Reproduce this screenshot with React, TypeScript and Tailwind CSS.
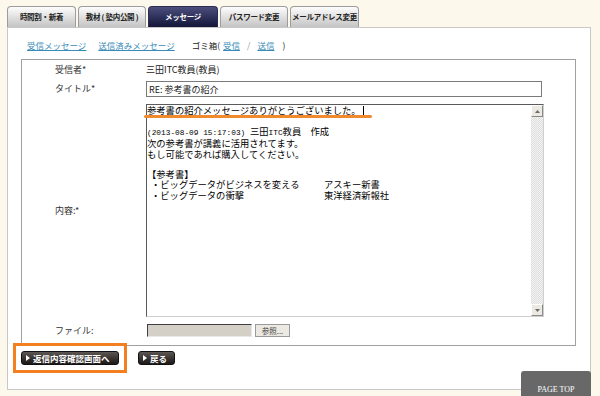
import React from 'react';

// タブ定義
const tabs = [
  { label: '時間割・新着', w: 'w-[69px]', active: false },
  { label: '教材 ( 塾内公開 )', w: 'w-[68px]', active: false },
  { label: 'メッセージ', w: 'w-[70px]', active: true },
  { label: 'パスワード変更', w: 'w-[68px]', active: false },
  { label: 'メールアドレス変更', w: 'w-[69px]', active: false },
];

const Arrow = () => (
  <svg width="4" height="6" viewBox="0 0 4 6" className="mr-[3px] shrink-0">
    <path d="M0 0 L4 3 L0 6 Z" fill="#fff" />
  </svg>
);

export default function App() {
  return (
    <div className="relative w-[600px] h-[396px] overflow-hidden bg-[#fcf8ec] pl-[7px] pt-[6px] font-['Noto_Sans_CJK_JP','Liberation_Sans',sans-serif] text-[#222]">
      {/* タブ */}
      <div className="flex gap-[2px] h-[21px]">
        {tabs.map((t) => (
          <div
            key={t.label}
            className={`${t.w} flex items-center justify-center rounded-t-[4px] border border-b-0 text-[7.5px] leading-[10px] font-bold whitespace-nowrap tracking-[-0.3px] ${
              t.active
                ? 'bg-linear-to-b from-[#4c4f7c] to-[#14163a] border-[#2a2c50] text-white'
                : 'bg-linear-to-b from-[#fdfdfd] to-[#c4c4c4] border-[#9c9c9c] text-[#222]'
            }`}
          >
            {t.label}
          </div>
        ))}
      </div>

      {/* 本体パネル */}
      <div className="w-[584px] h-[363px] border border-[#c8c8c8] bg-white">
        {/* リンク */}
        <div className="flex items-center h-[12px] mt-[11px] pl-[19px] text-[8.5px] leading-[12px] whitespace-nowrap">
          <span className="text-[#3a8cb8] underline">受信メッセージ</span>
          <span className="ml-[12px] text-[#3a8cb8] underline">送信済みメッセージ</span>
          <span className="ml-[17px]">ゴミ箱(</span>
          <span className="ml-[3px] text-[#3a8cb8] underline">受信</span>
          <span className="mx-[7px] text-[#999]">/</span>
          <span className="text-[#3a8cb8] underline">送信</span>
          <span className="ml-[8px]">)</span>
        </div>

        {/* フォーム */}
        <div className="mt-[8px] ml-[13px] w-[555px] border border-[#a0a0a0] pl-[33px] pt-[3px] pb-[8px] text-[9px] leading-[12px] text-[#333]">
          <div className="flex items-center h-[14px]">
            <div className="w-[91px]">受信者*</div>
            <div className="text-[#222]">三田ITC教員(教員)</div>
          </div>

          <div className="flex items-center h-[16px] mt-[4px]">
            <div className="w-[91px]">タイトル*</div>
            <input
              readOnly
              defaultValue="RE: 参考書の紹介"
              className="w-[396px] h-[16px] border border-[#7a7a7a] px-[2px] text-[9px] text-[#222] outline-none"
            />
          </div>

          <div className="flex items-center h-[213px] mt-[7px]">
            <div className="w-[91px]">内容:*</div>
            <div className="relative flex w-[398px] h-[213px] border border-t-[#5a5a5a] border-l-[#5a5a5a] border-r-[#cfcfcf] border-b-[#cfcfcf] bg-white">
              <div className="flex-1 text-[9.3px] leading-[10.3px] text-black whitespace-nowrap">
                <div className="flex items-center h-[11px]">
                  参考書の紹介メッセージありがとうございました。
                  <span className="inline-block w-px h-[9px] bg-black ml-[2px]" />
                </div>
                <div className="h-[10px]" />
                <div>
                  <span className="font-['Liberation_Mono',monospace] text-[7.8px]">(2013-08-09 15:17:03) </span>
                  三田<span className="font-['Liberation_Mono',monospace] text-[7.8px]">ITC</span>教員　作成
                </div>
                <div>次の参考書が講義に活用されてます。</div>
                <div>もし可能であれば購入してください。</div>
                <div className="h-[10.3px]" />
                <div>【参考書】</div>
                <div className="flex">
                  <span className="w-[177px] pl-[4px]">・ビッグデータがビジネスを変える</span>
                  <span>アスキー新書</span>
                </div>
                <div className="flex">
                  <span className="w-[177px] pl-[4px]">・ビッグデータの衝撃</span>
                  <span>東洋経済新報社</span>
                </div>
              </div>

              {/* スクロールバー */}
              <div className="flex flex-col w-[12px]">
                <div className="flex items-center justify-center h-[12px] bg-[#ece9e2] border border-t-white border-l-white border-r-[#8a8a8a] border-b-[#8a8a8a]">
                  <svg width="5" height="3" viewBox="0 0 5 3">
                    <path d="M0 3 L2.5 0 L5 3 Z" fill="#6a6a6a" />
                  </svg>
                </div>
                <div className="flex-1 bg-[repeating-conic-gradient(#dedede_0%_25%,#f3f3f3_0%_50%)] bg-[length:2px_2px]" />
                <div className="flex items-center justify-center h-[12px] bg-[#ece9e2] border border-t-white border-l-white border-r-[#8a8a8a] border-b-[#8a8a8a]">
                  <svg width="5" height="3" viewBox="0 0 5 3">
                    <path d="M0 0 L5 0 L2.5 3 Z" fill="#6a6a6a" />
                  </svg>
                </div>
              </div>

              {/* 注釈の下線 */}
              <div className="absolute left-[-3px] top-[10px] w-[228px] h-[3px] rounded-full bg-[#f08a2c]" />
            </div>
          </div>

          <div className="flex items-center h-[13px] mt-[7px]">
            <div className="w-[91px]">ファイル:</div>
            <div className="ml-[1px] w-[105px] h-[13px] bg-[#d4d0c8] border border-t-[#404040] border-l-[#404040] border-r-[#e8e8e8] border-b-[#e8e8e8]" />
            <div className="ml-[3px] flex items-center justify-center w-[35px] h-[13px] bg-[#ece9e2] border border-[#9a9a9a] text-[7.5px] leading-[10px] text-[#444]">
              参照...
            </div>
          </div>
        </div>

        {/* ボタン */}
        <div className="flex items-center mt-[5px] pl-[13px]">
          <button className="relative flex items-center w-[98px] h-[14px] pl-[4px] rounded-[3px] border border-[#111] bg-linear-to-b from-[#5e5754] to-[#1c1917] text-white text-[8.5px] leading-[10px] font-bold whitespace-nowrap">
            <Arrow />
            返信内容確認画面へ
            {/* 注釈の枠 */}
            <span className="absolute -left-[9px] -right-[9px] -top-[9px] -bottom-[9px] border-[3px] border-[#f47f20]" />
          </button>
          <button className="flex items-center ml-[19px] w-[37px] h-[14px] pl-[4px] rounded-[3px] border border-[#111] bg-linear-to-b from-[#5e5754] to-[#1c1917] text-white text-[8.5px] leading-[10px] font-bold whitespace-nowrap">
            <Arrow />
            戻る
          </button>
        </div>
      </div>

      {/* PAGE TOP */}
      <div className="absolute left-[521px] top-[371px] flex items-center justify-center w-[70px] h-[38px] rounded-t-[3px] bg-[#686868] text-white text-[8px] font-['Liberation_Serif',serif]">
        PAGE TOP
      </div>
    </div>
  );
}
